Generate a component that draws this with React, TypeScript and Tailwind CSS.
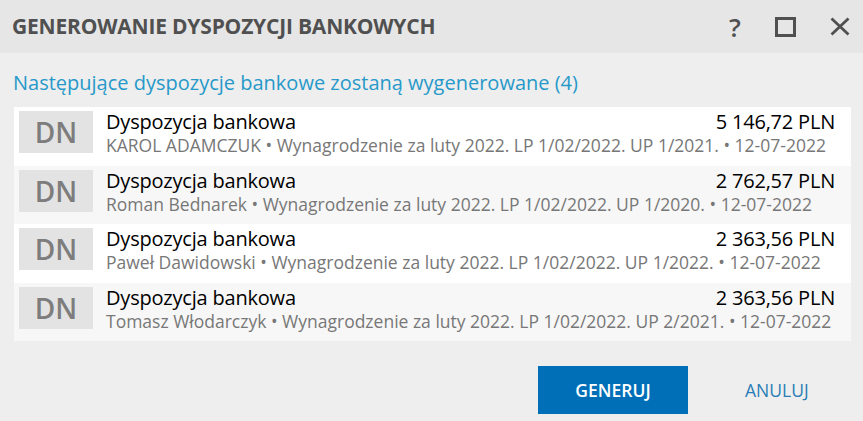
const rows = [
    { name: 'KAROL ADAMCZUK', up: 'UP 1/2021.', amount: '5 146,72 PLN' },
    { name: 'Roman Bednarek', up: 'UP 1/2020.', amount: '2 762,57 PLN' },
    { name: 'Paweł Dawidowski', up: 'UP 1/2022.', amount: '2 363,56 PLN' },
    { name: 'Tomasz Włodarczyk', up: 'UP 2/2021.', amount: '2 363,56 PLN' },
];

export default function App() {
    return (
        <div
            className="w-[863px] h-[421px] bg-[#eeeeee] flex flex-col"
            style={{ fontFamily: '"Open Sans", "Noto Sans", sans-serif' }}
        >
            {/* Nagłówek */}
            <div className="h-[53px] bg-[#e6e6e6] flex items-center pl-[12px] pr-[13px]">
                <h1 className="text-[21px] font-bold text-[#505050] tracking-[-0.2px]">
                    GENEROWANIE DYSPOZYCJI BANKOWYCH
                </h1>
                <div className="ml-auto flex items-center">
                    <span className="w-[14px] text-center text-[26px] font-semibold text-[#505050] leading-none mr-[33px]">?</span>
                    <div className="w-[21px] h-[20px] border-[3px] border-[#505050] mr-[34px]" />
                    <svg width="20" height="19" viewBox="0 0 20 19">
                        <path d="M1.5 1.5 L18.5 17.5 M18.5 1.5 L1.5 17.5" stroke="#505050" strokeWidth="2.8" />
                    </svg>
                </div>
            </div>

            <div className="px-[13px] pt-[17px]">
                <p className="text-[20px] text-[#2799c9] leading-[26px]">
                    Następujące dyspozycje bankowe zostaną wygenerowane (4)
                </p>

                <div className="mt-[11px] ml-px w-[837px] flex flex-col">
                    {rows.map((r, i) => (
                        <div
                            key={i}
                            className={`h-[58.5px] flex items-start pt-[4px] pl-[5px] pr-[16px] ${i % 2 === 0 ? 'bg-white' : 'bg-[#f7f7f7]'}`}
                        >
                            <div className="w-[74px] h-[42px] bg-[#e3e3e3] flex items-center justify-center text-[28px] font-semibold text-[#7d7d7d] leading-none">
                                DN
                            </div>
                            <div className="ml-[13px] -mt-[2px] flex-1 flex flex-col">
                                <div className="flex items-center justify-between">
                                    <span className="text-[20px] text-black leading-[25px] tracking-[-0.2px]">Dyspozycja bankowa</span>
                                    <span className="text-[20px] text-black leading-[25px] tracking-[-0.2px]">{r.amount}</span>
                                </div>
                                <span className="text-[17.5px] text-[#777777] leading-[22px]">
                                    {r.name} • Wynagrodzenie za luty 2022. LP 1/02/2022. {r.up} • 12-07-2022
                                </span>
                            </div>
                        </div>
                    ))}
                </div>
            </div>

            <div className="mt-[25px] flex items-center pl-[538px]">
                <button className="w-[150px] h-[48px] bg-[#006fb8] text-white text-[17.5px] font-semibold">
                    GENERUJ
                </button>
                <button className="ml-[57px] text-[17.5px] text-[#2a7db5]">ANULUJ</button>
            </div>
        </div>
    );
}
